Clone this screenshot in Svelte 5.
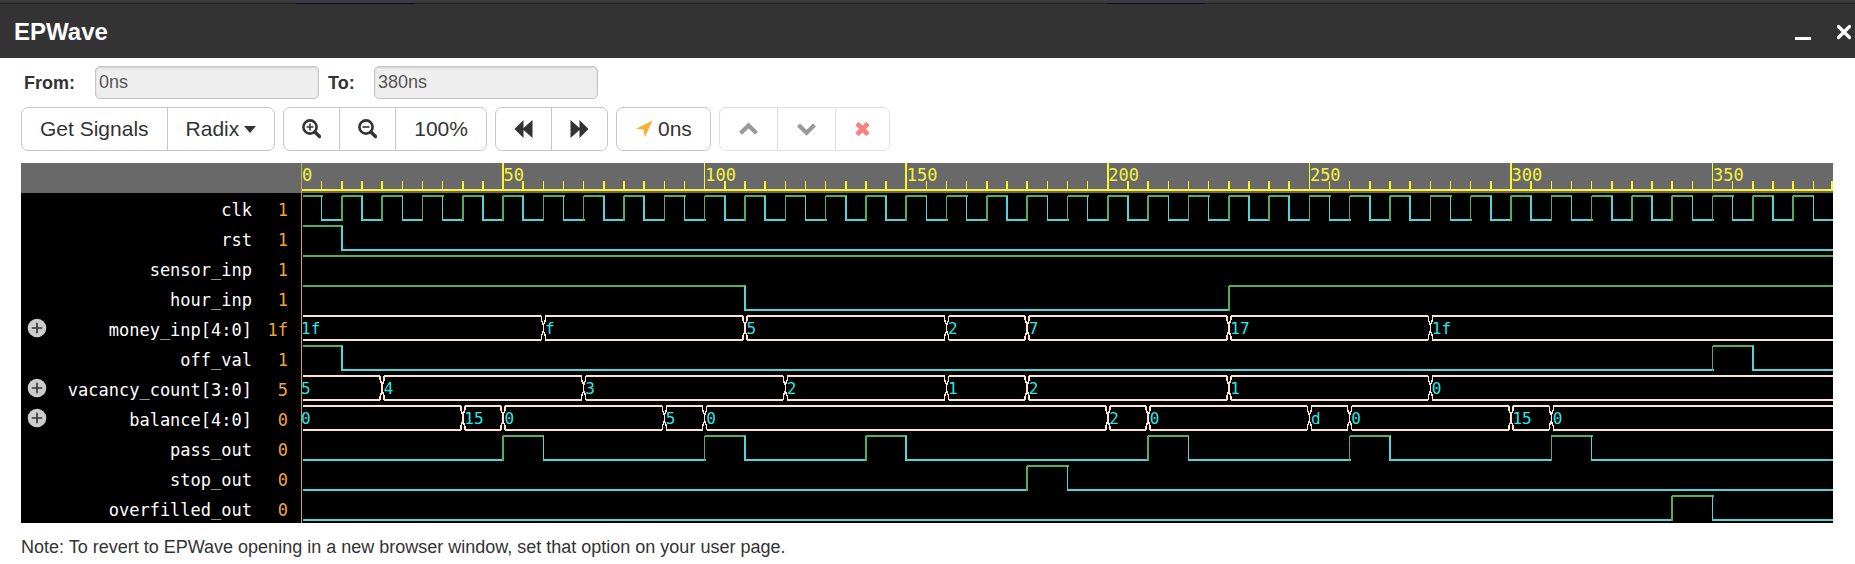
<script>
  const END = 380;
  const ROW = 30;
  const HEAD = 30;
  let width = $state(1532);

  const signals = [
    { name: 'clk', value: '1', edges: Array.from({ length: 76 }, (_, i) => [i * 5, i % 2 ? 0 : 1]) },
    { name: 'rst', value: '1', edges: [[0, 1], [10, 0]] },
    { name: 'sensor_inp', value: '1', edges: [[0, 1]] },
    { name: 'hour_inp', value: '1', edges: [[0, 1], [110, 0], [230, 1]] },
    { name: 'money_inp[4:0]', value: '1f', bus: [[0, '1f'], [60, 'f'], [110, '5'], [160, '2'], [180, '7'], [230, '17'], [280, '1f']] },
    { name: 'off_val', value: '1', edges: [[0, 1], [10, 0], [350, 1], [360, 0]] },
    { name: 'vacancy_count[3:0]', value: '5', bus: [[0, '5'], [20, '4'], [70, '3'], [120, '2'], [160, '1'], [180, '2'], [230, '1'], [280, '0']] },
    { name: 'balance[4:0]', value: '0', bus: [[0, '0'], [40, '15'], [50, '0'], [90, '5'], [100, '0'], [200, '2'], [210, '0'], [250, 'd'], [260, '0'], [300, '15'], [310, '0']] },
    { name: 'pass_out', value: '0', edges: [[0, 0], [50, 1], [60, 0], [100, 1], [110, 0], [140, 1], [150, 0], [210, 1], [220, 0], [260, 1], [270, 0], [310, 1], [320, 0]] },
    { name: 'stop_out', value: '0', edges: [[0, 0], [180, 1], [190, 0]] },
    { name: 'overfilled_out', value: '0', edges: [[0, 0], [340, 1], [350, 0]] }
  ];

  const ticks = Array.from({ length: 77 }, (_, i) => i * 5);
  const height = HEAD + ROW * signals.length;

  let scale = $derived(width / END);
  const px = (t) => (t === 0 ? 2 : t * scale + 0.5);

  function levelPath(edges, level, top) {
    const y = top + (level ? 3 : 27);
    return edges
      .map(([t, v], i) => {
        if (v !== level) return '';
        const end = i + 1 < edges.length ? px(edges[i + 1][0]) + 1 : width;
        return `M${px(t)} ${y}H${end}`;
      })
      .join('');
  }

  function edgePath(edges, level, top) {
    return edges
      .slice(1)
      .filter(([, v]) => v === level)
      .map(([t]) => `M${px(t)} ${top + 3}V${top + 28}`)
      .join('');
  }

  function busPath(bus, top) {
    return bus
      .map(([t], i) => {
        const start = px(t) + (i ? 2 : 0);
        const end = i + 1 < bus.length ? px(bus[i + 1][0]) - 2 : width;
        return `M${start} ${top + 3}H${end}M${start} ${top + 27}H${end}`;
      })
      .join('');
  }

  function crossPath(bus, top) {
    return bus
      .slice(1)
      .map(([t]) => {
        const x = px(t);
        return `M${x - 2} ${top + 3}V${top + 7}L${x} ${top + 12}V${top + 18}L${x + 2} ${top + 23}V${top + 27}` +
          `M${x + 2} ${top + 3}V${top + 7}L${x} ${top + 12}V${top + 18}L${x - 2} ${top + 23}V${top + 27}`;
      })
      .join('');
  }
</script>

<header class="titlebar">
  <div class="backdrop"><i></i><i></i></div>
  <h1>EPWave</h1>
  <div class="window-actions">
    <button type="button" aria-label="Minimize">
      <svg width="16" height="16" viewBox="0 0 16 16"><path d="M0 14.5H16" stroke="#fff" stroke-width="3" /></svg>
    </button>
    <button type="button" aria-label="Close">
      <svg width="16" height="16" viewBox="0 0 16 16"><path d="M2.5 2.5L13.5 13.5M13.5 2.5L2.5 13.5" stroke="#fff" stroke-width="3.2" stroke-linecap="round" /></svg>
    </button>
  </div>
</header>

<main>
  <form class="range">
    <label class="from" for="from">From:</label>
    <input id="from" type="text" value="0ns" disabled />
    <label class="to" for="to">To:</label>
    <input id="to" type="text" value="380ns" disabled />
  </form>

  <div class="toolbar">
    <div class="group">
      <button type="button">Get Signals</button>
      <button type="button">Radix<svg class="caret" width="12" height="7" viewBox="0 0 12 7"><path d="M0 0H12L6 7Z" fill="#333" /></svg></button>
    </div>
    <div class="group">
      <button type="button" aria-label="Zoom in">
        <svg width="19" height="20" viewBox="0 0 19 20" fill="none" stroke="#333"><circle cx="8" cy="8" r="6.6" stroke-width="2.6" /><path d="M13 13L17.500 17.500" stroke-width="3.4" stroke-linecap="round" /><path d="M4.500 8H11.500M8 4.500V11.500" stroke-width="1.6" /></svg>
      </button>
      <button type="button" aria-label="Zoom out">
        <svg width="19" height="20" viewBox="0 0 19 20" fill="none" stroke="#333"><circle cx="8" cy="8" r="6.6" stroke-width="2.6" /><path d="M13 13L17.500 17.500" stroke-width="3.4" stroke-linecap="round" /><path d="M4.500 8H11.500" stroke-width="1.6" /></svg>
      </button>
      <button type="button">100%</button>
    </div>
    <div class="group">
      <button type="button" aria-label="Previous edge">
        <svg width="19" height="20" viewBox="0 0 19 20"><path d="M9.500 1V9L18.500 1V19L9.500 11V19L0.500 10Z" fill="#333" /></svg>
      </button>
      <button type="button" aria-label="Next edge">
        <svg width="19" height="20" viewBox="0 0 19 20"><path d="M9.500 1V9L0.500 1V19L9.500 11V19L18.500 10Z" fill="#333" /></svg>
      </button>
    </div>
    <div class="group">
      <button type="button"><svg class="arrow" width="18" height="18" viewBox="0 0 18 18"><path d="M17.500 0.500L9.700 17.500L8.600 9.600L0.500 9Z" fill="#fbb030" /></svg>0ns</button>
    </div>
    <div class="group off">
      <button type="button" disabled aria-label="Move up">
        <svg width="21" height="20" viewBox="0 0 21 20"><path d="M2.500 14.300L10.500 6.500L18.500 14.300" fill="none" stroke="#999" stroke-width="4.200" /></svg>
      </button>
      <button type="button" disabled aria-label="Move down">
        <svg width="21" height="20" viewBox="0 0 21 20"><path d="M2.500 6L10.500 13.800L18.500 6" fill="none" stroke="#999" stroke-width="4.200" /></svg>
      </button>
      <button type="button" disabled aria-label="Remove">
        <svg width="17" height="20" viewBox="0 0 17 20"><path d="M3 4.500L14 15.500M14 4.500L3 15.500" stroke="#f88080" stroke-width="4.600" /></svg>
      </button>
    </div>
  </div>

  <section class="viewer">
    <div class="names">
      <div class="head"></div>
      {#each signals as s}
        <div class="row">
          {#if s.bus}
            <button type="button" class="expand" aria-label={`Expand ${s.name}`}>
              <svg width="20" height="20" viewBox="0 0 20 20"><circle cx="10" cy="10" r="9.300" fill="#ccc" /><path d="M4.800 10H15.200M10 4.800V15.200" stroke="#333" stroke-width="1.600" /></svg>
            </button>
          {/if}
          <span class="name">{s.name}</span>
          <span class="value">{s.value}</span>
        </div>
      {/each}
    </div>
    <div class="waves" bind:clientWidth={width}>
      <svg {width} {height}>
        <rect {width} height={HEAD} fill="#696969" />
        <rect y="26" {width} height="2" fill="#f4f05a" />
        <rect y="28" {width} height="2" fill="#757022" />
        {#each ticks as t}
          {#if t > 0}
            <path class="tick" d={`M${t === END ? width - 1 : px(t)} ${t % 50 ? 18 : 0}V26`} />
          {/if}
          {#if t % 50 === 0}
            <text class="time" x={t * scale + 1} y="18">{t}</text>
          {/if}
        {/each}
        {#each signals as s, i}
          {@const top = HEAD + i * ROW}
          {#if s.edges}
            <path class="high" d={levelPath(s.edges, 1, top)} />
            <path class="low" d={levelPath(s.edges, 0, top)} />
            <path class="high edge" d={edgePath(s.edges, 1, top)} />
            <path class="low edge" d={edgePath(s.edges, 0, top)} />
          {:else}
            <path class="bus" d={busPath(s.bus, top)} />
            <path class="bus cross" d={crossPath(s.bus, top)} />
            {#each s.bus as [t, v]}
              <text class="data" x={t * scale + (t ? 2 : 0)} y={top + 21}>{v}</text>
            {/each}
          {/if}
        {/each}
        <rect width="1" {height} fill="#d9a04a" />
      </svg>
    </div>
  </section>

  <p class="note">Note: To revert to EPWave opening in a new browser window, set that option on your user page.</p>
</main>

<style>
  :global(body) {
    background: #fff;
    color: #333;
    font-family: "Liberation Sans", Arial, sans-serif;
  }

  .titlebar {
    display: grid;
    grid-template-columns: 1fr auto;
    align-items: center;
    height: 58px;
    padding: 0 3px 0 14px;
    box-sizing: border-box;
    position: relative;
    background: #333;
  }

  .backdrop {
    position: absolute;
    inset: 0 0 auto;
    display: flex;
    height: 4px;
    padding-left: 296px;
    gap: 692px;
    align-items: flex-end;
    background: linear-gradient(#3e3e3e 0 2px, #363636 2px 3px, #222 3px);
  }

  .backdrop i {
    width: 119px;
    height: 4px;
    background: linear-gradient(#3a3b44 0 3px, #10101c 3px);
  }

  .backdrop i + i {
    width: 98px;
  }

  h1 {
    margin: 5px 0 0;
    color: #fff;
    font-size: 24px;
    line-height: 28px;
  }

  .window-actions {
    display: flex;
    gap: 25px;
    padding-top: 5px;
  }

  .window-actions button,
  .expand {
    display: block;
    padding: 0;
    border: 0;
    background: none;
  }

  svg {
    display: block;
  }

  main {
    padding: 8px 22px 0 21px;
  }

  .range {
    display: flex;
    align-items: center;
    font-size: 18px;
  }

  label {
    font-weight: bold;
    line-height: 24px;
  }

  .from {
    width: 71px;
    padding-left: 3px;
  }

  .to {
    width: 46px;
    padding-left: 9px;
  }

  input {
    width: 224px;
    height: 33px;
    padding: 0 3px;
    box-sizing: border-box;
    border: 1px solid #c4c4c4;
    border-radius: 5px;
    background: #eee;
    box-shadow: inset 0 1px 2px rgba(0, 0, 0, 0.12);
    color: #555;
    font: 18px "Liberation Sans", Arial, sans-serif;
  }

  .toolbar {
    display: flex;
    gap: 8px;
    margin-top: 8px;
  }

  .group {
    display: flex;
    border: 1px solid #c6c6c6;
    border-radius: 7px;
  }

  .group button {
    display: flex;
    align-items: center;
    height: 42px;
    padding: 0 18px;
    border: 0;
    background: none;
    color: #333;
    font: 21px "Liberation Sans", Arial, sans-serif;
    white-space: nowrap;
  }

  .group button + button {
    border-left: 1px solid #c6c6c6;
  }

  .off,
  .group.off button + button {
    border-color: #e0e0e0;
  }

  .caret {
    margin-left: 5px;
  }

  .arrow {
    margin-right: 5px;
  }

  .viewer {
    display: flex;
    margin-top: 12px;
    background: #000;
    font-family: "DejaVu Sans Mono", monospace;
    font-size: 17px;
  }

  .names {
    flex: none;
    width: 280px;
  }

  .head {
    height: 30px;
    background: #696969;
  }

  .row {
    display: flex;
    align-items: center;
    height: 30px;
    padding: 0 13px 0 6px;
    color: #fff;
    line-height: 30px;
  }

  .name {
    flex: 1;
    padding-top: 4px;
    text-align: right;
  }

  .value {
    width: 36px;
    padding-top: 4px;
    color: #f0a53a;
    text-align: right;
  }

  .waves {
    flex: 1;
    min-width: 0;
    height: 360px;
    overflow: hidden;
  }

  path.tick {
    stroke: #fbf530;
    stroke-width: 1.5px;
    shape-rendering: crispEdges;
  }

  .time {
    fill: #f6f23c;
  }

  .high,
  .low,
  .bus {
    fill: none;
    stroke-width: 2px;
    shape-rendering: crispEdges;
  }

  .high {
    stroke: #55ad55;
  }

  .low {
    stroke: #4fd6dc;
  }

  .edge {
    stroke-width: 1.5px;
  }

  .bus {
    stroke: #fbe3cd;
  }

  .cross {
    stroke-width: 1.5px;
  }

  .data {
    fill: #2ee6e6;
    font-size: 16px;
  }

  .note {
    margin: 12px 0 0;
    font-size: 18px;
    line-height: 24px;
  }
</style>
